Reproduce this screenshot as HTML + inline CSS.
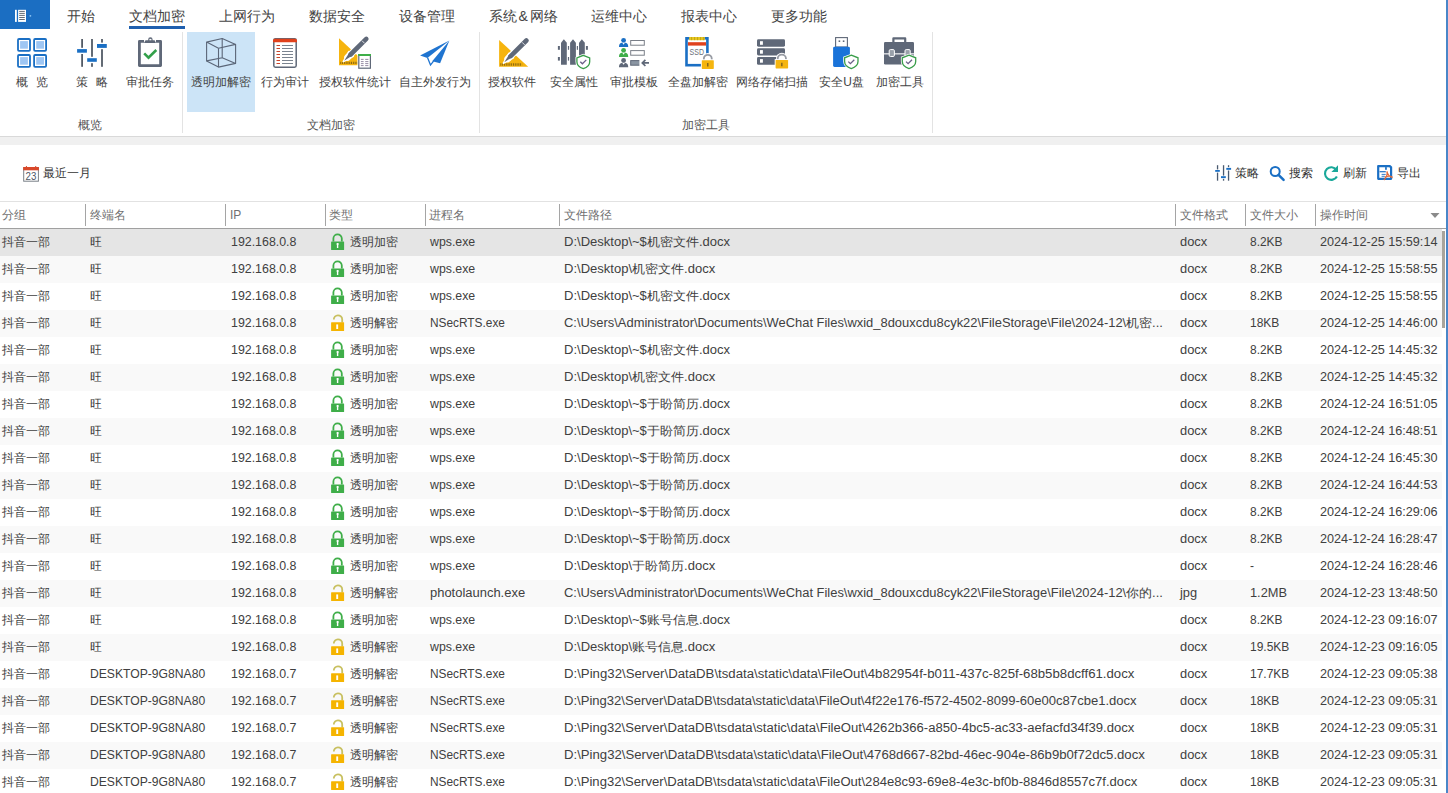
<!DOCTYPE html><html><head><meta charset="utf-8"><title>Ping32</title><style>
*{margin:0;padding:0;box-sizing:border-box}
html,body{width:1448px;height:793px;overflow:hidden;background:#fff}
body{font-family:"Liberation Sans",sans-serif;font-size:12px;color:#333;position:relative}
.a{position:absolute;white-space:nowrap}
.tab{position:absolute;top:1.5px;height:29px;line-height:29px;font-size:14px;color:#444}
.bl{position:absolute;top:72.5px;height:18px;line-height:18px;font-size:12px;color:#444;text-align:center}
.gl{position:absolute;top:117px;height:16px;line-height:16px;font-size:12px;color:#555;text-align:center}
.sep{position:absolute;top:32px;width:1px;height:101px;background:#e3e3e3}
.hd{position:absolute;top:202px;height:26px;line-height:26px;color:#707070;white-space:nowrap}
.hs{position:absolute;top:204px;width:1px;height:22px;background:#a5a5a5}
.row{position:absolute;left:0;width:1442px;height:27px;color:#404040}
.c{position:absolute;top:0;height:27px;line-height:27px;white-space:nowrap}
</style></head><body>
<div class="a" style="left:0;top:0;width:50px;height:29px;background:#1b6ec2"></div>
<svg style="position:absolute;left:12px;top:6px" width="24" height="20" viewBox="12 6 24 20"><rect x="15" y="9.8" width="1.8" height="12.1" fill="#fff"/>
<rect x="18.1" y="9.8" width="7.9" height="12.1" fill="#fff"/>
<g stroke="#3e4650" stroke-width="0.8"><path d="M19.2 11.4h5.6M19.2 13.4h5.6M19.2 15.4h5.6M19.2 17.5h5.6M19.2 19.5h5.6"/></g>
<circle cx="30.4" cy="15.8" r="0.9" fill="#8cc4f4"/></svg>
<div class="tab" style="left:67px">开始</div>
<div class="tab" style="left:129px">文档加密</div>
<div class="tab" style="left:219px">上网行为</div>
<div class="tab" style="left:309px">数据安全</div>
<div class="tab" style="left:399px">设备管理</div>
<div class="tab" style="left:489px">系统<span style='display:inline-block;width:12.5px;text-align:center'>&amp;</span>网络</div>
<div class="tab" style="left:591px">运维中心</div>
<div class="tab" style="left:681px">报表中心</div>
<div class="tab" style="left:771px">更多功能</div>
<div class="a" style="left:129px;top:26px;width:56px;height:3px;background:#1f5fae"></div>
<div class="a" style="left:0;top:136px;width:1448px;height:1px;background:#d9d9d9"></div>
<div class="a" style="left:0;top:137px;width:1448px;height:8px;background:#f0f0f0"></div>
<div class="sep" style="left:182px"></div>
<div class="sep" style="left:479px"></div>
<div class="sep" style="left:932px"></div>
<div class="a" style="left:187px;top:32px;width:68px;height:80px;background:#cce4f7"></div>
<svg style="position:absolute;left:15px;top:36px" width="34" height="34" viewBox="15 36 34 34">
<g fill="#fff" stroke="#1a6fc4" stroke-width="1.8">
<rect x="18" y="39" width="12" height="11.8" rx="1"/><rect x="34.1" y="39" width="12" height="11.8" rx="1"/>
<rect x="18" y="55" width="12" height="11.8" rx="1"/><rect x="34.1" y="55" width="12" height="11.8" rx="1"/></g>
<g fill="#9ec6f3"><rect x="20.1" y="41.1" width="7.8" height="7.6"/><rect x="36.2" y="41.1" width="7.8" height="7.6"/>
<rect x="20.1" y="57.1" width="7.8" height="7.6"/><rect x="36.2" y="57.1" width="7.8" height="7.6"/></g>
</svg>
<svg style="position:absolute;left:75px;top:36px" width="34" height="34" viewBox="75 36 34 34">
<g fill="#535b66">
<rect x="81.2" y="39" width="1.8" height="8.8"/><rect x="81.2" y="54" width="1.8" height="12.8"/>
<rect x="91.1" y="39" width="1.8" height="17.8"/><rect x="91.1" y="63.2" width="1.8" height="3.6"/>
<rect x="101.1" y="39" width="1.8" height="3.6"/><rect x="101.1" y="49.2" width="1.8" height="17.6"/></g>
<g fill="#1a6fc4">
<rect x="77.1" y="49.1" width="9.8" height="3.6"/>
<rect x="87.2" y="58.2" width="9.6" height="3.6"/>
<rect x="97" y="44" width="9.8" height="3.9"/></g>
</svg>
<svg style="position:absolute;left:134px;top:34px" width="32" height="36" viewBox="134 34 32 36">
<path d="M144 41.4 H139.4 V65.6 H160.6 V41.4 H156" fill="none" stroke="#5f6878" stroke-width="2.8" stroke-linejoin="round"/>
<path d="M144 43 L145.5 40.2 H148.2 V39.4 A2.2 2.2 0 0 1 152.6 39.4 V40.2 H154.6 L156 43 Z" fill="#5f6878"/>
<rect x="149.4" y="38.9" width="2" height="1.4" fill="#fff"/>
<path d="M144.2 53.4 L148.5 57.6 L156.3 50" fill="none" stroke="#33a04a" stroke-width="2.6"/>
</svg>
<svg style="position:absolute;left:203px;top:35px" width="36" height="36" viewBox="203 35 36 36"><g fill="none" stroke="#5b6678" stroke-width="1.1" stroke-linejoin="round">
<path d="M206.6 42.1 L222.2 38.5 L235.6 44.4 L218.5 48.2 Z"/>
<path d="M206.6 42.1 V60.9 L218.5 67.1 L235.6 63.4 V44.4"/>
<path d="M218.5 48.2 V67.1"/>
<path d="M222.2 38.5 V57.8 L206.6 60.9 M222.2 57.8 L235.6 63.4"/>
</g></svg>
<svg style="position:absolute;left:271px;top:36px" width="28" height="34" viewBox="271 36 28 34">
<rect x="273.8" y="38.8" width="22.4" height="28.4" rx="1.6" fill="#fff" stroke="#5f6878" stroke-width="1.5"/>
<path d="M273 40.6 a1.8 1.8 0 0 1 1.8 -1.8 h20.4 a1.8 1.8 0 0 1 1.8 1.8 v1.6 h-24 z" fill="#e0411c"/>
<g stroke="#c8442a" stroke-width="1.1">
<path d="M276.5 45.5h3.5M276.5 48.5h3.5M276.5 51.5h3.5M276.5 54.5h3.5M276.5 57.5h3.5M276.5 60.5h3.5M276.5 63.5h3.5"/></g>
<g stroke="#7a8490" stroke-width="1">
<path d="M282 45.5h11M282 48.5h11M282 51.5h11M282 54.5h11M282 57.5h11M282 60.5h11M282 63.5h11"/></g>
</svg>
<svg style="position:absolute;left:336px;top:35px" width="38" height="36" viewBox="336 35 38 36"><path d="M339.00 38.30 L339.00 65.20 L368.10 65.20 Z" fill="#f6b40e"/>
<path d="M340.30 62.90 H362.00" stroke="#7a5a10" stroke-width="2.4" stroke-dasharray="0.9 0.9" opacity="0.9"/>
<path d="M366.30 38.90 L347.60 57.30" stroke="#fff" stroke-width="6.8" stroke-linecap="round"/>
<path d="M348.80 51.70 L353.30 56.20 L343.30 61.60 Z" fill="#fff" stroke="#fff" stroke-width="1.6" stroke-linejoin="round"/>
<path d="M366.30 38.90 L350.60 54.50" stroke="#5f6878" stroke-width="4.6" stroke-linecap="round"/>
<path d="M362.00 40.70 L364.60 43.30" stroke="#fff" stroke-width="0.8"/>
<path d="M348.90 53.20 L351.60 55.90 L344.20 60.70 Z" fill="#5f6878"/>

<rect x="357.4" y="53.2" width="14.6" height="16.2" fill="#fff"/>
<rect x="358.8" y="54.6" width="11.6" height="13.6" fill="#fff" stroke="#5f6878" stroke-width="1.2"/>
<rect x="358.2" y="54" width="12.8" height="2" fill="#3fae49"/>
<g stroke="#8a7f9a" stroke-width="0.9"><path d="M360.9 59.4h2.7M365.2 59.4h3.2M360.9 61.6h2.7M365.2 61.6h3.2M360.9 63.6h2.7M365.2 63.6h3.2M360.9 65.6h2.7M365.2 65.6h3.2"/></g>
</svg>
<svg style="position:absolute;left:417px;top:37px" width="36" height="32" viewBox="417 37 36 32">
<path d="M420.1 55.5 L449.4 40.4 L427.4 57.9 Z" fill="#1f74d0"/>
<path d="M449.4 40.4 L440.1 63.2 L432.2 61.2 Z" fill="#1f74d0"/>
<path d="M427.6 57.8 L430.5 65 L433.6 61.2" fill="none" stroke="#1f74d0" stroke-width="1.3" stroke-linejoin="miter"/>
</svg>
<svg style="position:absolute;left:496px;top:36px" width="36" height="34" viewBox="496 36 36 34"><path d="M499.10 39.90 L499.10 66.80 L528.20 66.80 Z" fill="#f6b40e"/>
<path d="M500.40 64.50 H522.10" stroke="#7a5a10" stroke-width="2.4" stroke-dasharray="0.9 0.9" opacity="0.9"/>
<path d="M526.40 40.50 L507.70 58.90" stroke="#fff" stroke-width="6.8" stroke-linecap="round"/>
<path d="M508.90 53.30 L513.40 57.80 L503.40 63.20 Z" fill="#fff" stroke="#fff" stroke-width="1.6" stroke-linejoin="round"/>
<path d="M526.40 40.50 L510.70 56.10" stroke="#5f6878" stroke-width="4.6" stroke-linecap="round"/>
<path d="M522.10 42.30 L524.70 44.90" stroke="#fff" stroke-width="0.8"/>
<path d="M509.00 54.80 L511.70 57.50 L504.30 62.30 Z" fill="#5f6878"/>
</svg>
<svg style="position:absolute;left:555px;top:36px" width="38" height="36" viewBox="555 36 38 36"><g fill="#5f6878">
<path d="M561 42.8 L563.9 39.2 L566.8 42.8 V64.7 H561 Z"/>
<path d="M570.1 42.8 L573 39.2 L575.9 42.8 V64.7 H570.1 Z"/>
<path d="M579 42.8 L581.9 39.2 L584.8 42.8 V64.7 H579 Z"/>
<rect x="557.9" y="46" width="2" height="3.8"/><rect x="567.9" y="46" width="1.2" height="3.8"/><rect x="576.8" y="46" width="1.2" height="3.8"/><rect x="585.9" y="46" width="2" height="3.8"/>
<rect x="557.9" y="57" width="2" height="3.6"/><rect x="567.9" y="57" width="1.2" height="3.6"/>
</g>
<path d="M583.3 55.3 L589.6999999999999 57.9 V61.699999999999996 C589.6999999999999 65.7 586.3 67.7 583.3 68.6 C580.3 67.7 576.9 65.7 576.9 61.699999999999996 V57.9 Z" fill="#fff" stroke="#fff" stroke-width="2.8"/>
<path d="M583.3 55.3 L589.6999999999999 57.9 V61.699999999999996 C589.6999999999999 65.7 586.3 67.7 583.3 68.6 C580.3 67.7 576.9 65.7 576.9 61.699999999999996 V57.9 Z" fill="#fff" stroke="#3a9e4a" stroke-width="1.3"/>
<path d="M580.3 61.699999999999996 l2.1 2.1 l3.9 -3.9" fill="none" stroke="#6a5f88" stroke-width="1.3"/></svg>
<svg style="position:absolute;left:615px;top:36px" width="38" height="34" viewBox="615 36 38 34"><ellipse cx="623.6" cy="40.300000000000004" rx="2.4" ry="2.3" fill="#1a6fc4"/><path d="M619.0 47.1 C619.0 43.7 620.6 42.6 623.6 42.6 C626.6 42.6 628.2 43.7 628.2 47.1 Z" fill="#1a6fc4"/><path d="M622.3000000000001 42.800000000000004 L623.6 44.7 L624.9 42.800000000000004 Z" fill="#fff"/><ellipse cx="623.6" cy="50.300000000000004" rx="2.4" ry="2.3" fill="#3fae49"/><path d="M619.0 57.1 C619.0 53.7 620.6 52.6 623.6 52.6 C626.6 52.6 628.2 53.7 628.2 57.1 Z" fill="#3fae49"/><path d="M622.3000000000001 52.800000000000004 L623.6 54.7 L624.9 52.800000000000004 Z" fill="#fff"/><ellipse cx="623.6" cy="60.400000000000006" rx="2.4" ry="2.3" fill="#5f6878"/><path d="M619.0 67.2 C619.0 63.800000000000004 620.6 62.7 623.6 62.7 C626.6 62.7 628.2 63.800000000000004 628.2 67.2 Z" fill="#5f6878"/><path d="M622.3000000000001 62.900000000000006 L623.6 64.8 L624.9 62.900000000000006 Z" fill="#fff"/>
<rect x="630.7" y="40.5" width="13.6" height="4.7" fill="none" stroke="#7a7f88" stroke-width="1"/>
<rect x="630.7" y="50.6" width="13.6" height="4.6" fill="none" stroke="#7a7f88" stroke-width="1"/>
<rect x="630.7" y="60.6" width="10" height="4.6" fill="#8a95a2" stroke="#5f6878" stroke-width="1"/>
<rect x="639.4" y="58.6" width="3" height="8.8" fill="#fff"/>
<path d="M649 62.9 H642.6 M645.4 59.8 L642.3 62.9 L645.4 66" fill="none" stroke="#5f6878" stroke-width="1.7"/>
</svg>
<svg style="position:absolute;left:682px;top:34px" width="36" height="38" viewBox="682 34 36 38">
<rect x="686.5" y="38.3" width="20.9" height="26.9" fill="#fff" stroke="#1a6fc4" stroke-width="2.6"/>
<rect x="689.2" y="37" width="15.6" height="3.2" fill="#e8c820"/>
<g stroke="#a88a10" stroke-width="0.6"><path d="M691.6 37v3.2M694.6 37v3.2M697.6 37v3.2M700.6 37v3.2M703.4 37v3.2"/></g>
<rect x="688" y="42.2" width="18" height="3.4" fill="#e0411c"/>
<text x="689.6" y="54.9" font-family="Liberation Sans" font-size="8.4" fill="#6a6f78" textLength="14.4" lengthAdjust="spacingAndGlyphs">SSD</text>
<path d="M702.04 60.80 V58.76 A5.76 5.76 0 0 1 713.56 58.76 V60.80 Z" fill="#fff"/>
<path d="M703.84 60.20 V58.76 A3.96 3.96 0 0 1 711.76 58.76 V60.20" fill="none" stroke="#979ba3" stroke-width="1.8"/>
<rect x="700.90" y="59.30" width="13.80" height="10.50" fill="#fff"/>
<rect x="701.8" y="60.20" width="12" height="8.7" rx="0.6" fill="#f5b50f"/>
<path d="M707.80 63.00 v3.4" stroke="#6a5420" stroke-width="1.2"/></svg>
<svg style="position:absolute;left:754px;top:36px" width="38" height="36" viewBox="754 36 38 36"><g fill="#5f6878">
<rect x="757" y="39.3" width="28" height="7.4" rx="1.4"/>
<rect x="757" y="48.2" width="28" height="7.3" rx="1.4"/>
<rect x="757" y="57" width="28" height="7.8" rx="1.4"/></g>
<g fill="#fff"><rect x="760" y="41.2" width="2.9" height="3.6"/><rect x="760" y="50.1" width="2.9" height="3.6"/><rect x="760" y="59.1" width="2.9" height="3.6"/></g>
<path d="M775.93 60.60 V58.73 A5.92 5.92 0 0 1 787.77 58.73 V60.60 Z" fill="#fff"/>
<path d="M777.73 60.00 V58.73 A4.12 4.12 0 0 1 785.98 58.73 V60.00" fill="none" stroke="#979ba3" stroke-width="1.8"/>
<rect x="774.70" y="59.10" width="14.30" height="10.20" fill="#fff"/>
<rect x="775.6" y="60.00" width="12.5" height="8.4" rx="0.6" fill="#f5b50f"/>
<path d="M781.85 62.80 v3.4" stroke="#6a5420" stroke-width="1.2"/></svg>
<svg style="position:absolute;left:830px;top:35px" width="32" height="36" viewBox="830 35 32 36">
<rect x="835.6" y="37.6" width="11.8" height="9.4" fill="#fff" stroke="#5f6878" stroke-width="1.1"/>
<rect x="838.6" y="40.4" width="1.6" height="1.6" fill="#5f6878"/><rect x="842.8" y="40.4" width="1.6" height="1.6" fill="#5f6878"/>
<rect x="833.1" y="46.8" width="16.8" height="20.1" rx="1.4" fill="#1a73d9"/>
<path d="M851.3 55.2 L858.0 57.800000000000004 V61.6 C858.0 65.60000000000001 854.3 67.60000000000001 851.3 68.60000000000001 C848.3 67.60000000000001 844.5999999999999 65.60000000000001 844.5999999999999 61.6 V57.800000000000004 Z" fill="#fff" stroke="#fff" stroke-width="2.8"/>
<path d="M851.3 55.2 L858.0 57.800000000000004 V61.6 C858.0 65.60000000000001 854.3 67.60000000000001 851.3 68.60000000000001 C848.3 67.60000000000001 844.5999999999999 65.60000000000001 844.5999999999999 61.6 V57.800000000000004 Z" fill="#fff" stroke="#3a9e4a" stroke-width="1.3"/>
<path d="M848.3 61.6 l2.1 2.1 l3.9 -3.9" fill="none" stroke="#6a5f88" stroke-width="1.3"/></svg>
<svg style="position:absolute;left:881px;top:35px" width="38" height="36" viewBox="881 35 38 36">
<path d="M893.4 42.5 V38.4 H905.2 V42.5" fill="none" stroke="#5f6878" stroke-width="2.2" stroke-linejoin="round"/>
<rect x="884" y="42" width="30" height="22.5" rx="1.2" fill="#5f6878"/>
<rect x="884" y="53.3" width="30" height="1.1" fill="#fff"/>
<rect x="889.2" y="49.6" width="5.2" height="6.9" rx="1.2" fill="#9aa1aa" stroke="#fff" stroke-width="1"/>
<rect x="905" y="49.6" width="5.2" height="6.9" rx="1.2" fill="#9aa1aa" stroke="#fff" stroke-width="1"/>
<path d="M909 55.2 L915.7 57.800000000000004 V61.6 C915.7 65.60000000000001 912 67.60000000000001 909 68.60000000000001 C906 67.60000000000001 902.3 65.60000000000001 902.3 61.6 V57.800000000000004 Z" fill="#fff" stroke="#fff" stroke-width="2.8"/>
<path d="M909 55.2 L915.7 57.800000000000004 V61.6 C915.7 65.60000000000001 912 67.60000000000001 909 68.60000000000001 C906 67.60000000000001 902.3 65.60000000000001 902.3 61.6 V57.800000000000004 Z" fill="#fff" stroke="#3a9e4a" stroke-width="1.3"/>
<path d="M906 61.6 l2.1 2.1 l3.9 -3.9" fill="none" stroke="#6a5f88" stroke-width="1.3"/></svg>
<div class="bl" style="left:-18px;width:100px">概<span style='display:inline-block;width:8px'></span>览</div>
<div class="bl" style="left:42px;width:100px">策<span style='display:inline-block;width:8px'></span>略</div>
<div class="bl" style="left:100px;width:100px">审批任务</div>
<div class="bl" style="left:171px;width:100px">透明加解密</div>
<div class="bl" style="left:235px;width:100px">行为审计</div>
<div class="bl" style="left:305px;width:100px">授权软件统计</div>
<div class="bl" style="left:385px;width:100px">自主外发行为</div>
<div class="bl" style="left:462px;width:100px">授权软件</div>
<div class="bl" style="left:524px;width:100px">安全属性</div>
<div class="bl" style="left:584px;width:100px">审批模板</div>
<div class="bl" style="left:648px;width:100px">全盘加解密</div>
<div class="bl" style="left:722px;width:100px">网络存储扫描</div>
<div class="bl" style="left:791.5px;width:100px">安全U盘</div>
<div class="bl" style="left:850px;width:100px">加密工具</div>
<div class="gl" style="left:40px;width:100px">概览</div>
<div class="gl" style="left:281px;width:100px">文档加密</div>
<div class="gl" style="left:656px;width:100px">加密工具</div>
<svg style="position:absolute;left:1213px;top:163px" width="20" height="20" viewBox="1213 163 20 20">
<g fill="#4a5a70"><rect x="1216.9" y="165.2" width="1.3" height="4.2"/><rect x="1216.9" y="172.6" width="1.3" height="8.1"/>
<rect x="1222.9" y="165.2" width="1.3" height="10.4"/><rect x="1222.9" y="178.8" width="1.3" height="1.9"/>
<rect x="1227.9" y="165.2" width="1.3" height="2"/><rect x="1227.9" y="170.5" width="1.3" height="10.2"/></g>
<g fill="#1a6fc4"><rect x="1215.2" y="170" width="4.6" height="1.8"/><rect x="1221" y="176.2" width="4.8" height="1.9"/><rect x="1226.3" y="167.9" width="4.8" height="1.9"/></g>
</svg>
<svg style="position:absolute;left:1267px;top:163px" width="20" height="20" viewBox="1267 163 20 20">
<circle cx="1275.2" cy="171.5" r="4.5" fill="none" stroke="#1a6fc4" stroke-width="2"/>
<path d="M1278.5 174.8 L1283.6 179.9" stroke="#1a6fc4" stroke-width="2.5" stroke-linecap="round"/>
</svg>
<svg style="position:absolute;left:1321px;top:163px" width="20" height="20" viewBox="1321 163 20 20">
<path d="M1336.4 169.8 A6.3 6.3 0 1 0 1336.9 176.4" fill="none" stroke="#1aa89a" stroke-width="2.1"/>
<path d="M1338 165.2 V172 H1331.4 Z" fill="#1aa89a"/>
</svg>
<svg style="position:absolute;left:1375px;top:162px" width="20" height="21" viewBox="1375 162 20 21">
<path d="M1378.2 166.1 H1389.8 L1391.1 167.4 V178.8 H1378.2 Z" fill="none" stroke="#1a6fc4" stroke-width="2.2" stroke-linejoin="round"/>
<path d="M1379.6 171.7 H1385.8" stroke="#1a6fc4" stroke-width="1.2"/>
<rect x="1385.1" y="167.1" width="1.7" height="2.7" fill="#1a6fc4"/>
<path d="M1381.6 174.4h4.1M1381.6 176.3h3.2" stroke="#1a6fc4" stroke-width="0.9"/>
<path d="M1386.9 171.4 C1387.8 173.6 1386.6 177.6 1383.8 180 M1386.9 171.4 C1387.4 174.2 1390 177 1392.6 177.6 M1384.6 177 C1387 176.2 1390.4 176 1392.4 176.8" fill="none" stroke="#e06a3a" stroke-width="1.3"/>
</svg>
<svg style="position:absolute;left:21px;top:164px" width="20" height="20" viewBox="21 164 20 20">
<rect x="23.7" y="167.6" width="14.7" height="13.6" fill="#fff" stroke="#7a8088" stroke-width="1"/>
<rect x="23.2" y="167" width="15.7" height="3.3" fill="#d9482a"/>
<rect x="25.9" y="166" width="1" height="1.6" fill="#d9482a"/><rect x="35.2" y="166" width="1" height="1.6" fill="#d9482a"/>
<text x="25.6" y="179.9" font-family="Liberation Sans" font-size="10.4" fill="#4e5666" textLength="10.8" lengthAdjust="spacingAndGlyphs">23</text>
</svg>
<div class="a" style="left:43px;top:164px;height:18px;line-height:18px">最近一月</div>
<div class="a" style="left:1235px;top:164px;height:18px;line-height:18px">策略</div>
<div class="a" style="left:1289px;top:164px;height:18px;line-height:18px">搜索</div>
<div class="a" style="left:1343px;top:164px;height:18px;line-height:18px">刷新</div>
<div class="a" style="left:1397px;top:164px;height:18px;line-height:18px">导出</div>
<div class="a" style="left:0;top:201px;width:1446px;height:1px;background:#e2e2e2"></div>
<div class="a" style="left:0;top:228px;width:1446px;height:1px;background:#a0a0a0"></div>
<div class="hs" style="left:85px"></div>
<div class="hs" style="left:225px"></div>
<div class="hs" style="left:325px"></div>
<div class="hs" style="left:425px"></div>
<div class="hs" style="left:559px"></div>
<div class="hs" style="left:1175px"></div>
<div class="hs" style="left:1245px"></div>
<div class="hs" style="left:1315px"></div>
<div class="hd" style="left:2px">分组</div>
<div class="hd" style="left:90px">终端名</div>
<div class="hd" style="left:230px">IP</div>
<div class="hd" style="left:329px">类型</div>
<div class="hd" style="left:429px">进程名</div>
<div class="hd" style="left:564px">文件路径</div>
<div class="hd" style="left:1180px">文件格式</div>
<div class="hd" style="left:1250px">文件大小</div>
<div class="hd" style="left:1320px">操作时间</div>
<svg class="a" style="left:1429px;top:211px" width="12" height="8"><path d="M1.5 2 H10.5 L6 7 Z" fill="#8a8a8a"/></svg>
<div class="row" style="top:229px;background:#e5e5e5">
<div class="c" style="left:2px">抖音一部</div>
<div class="c" style="left:90px">旺</div>
<div class="c" style="left:231px;transform:scaleX(1.032);transform-origin:0 50%">192.168.0.8</div>
<div class="c" style="left:350px">透明加密</div>
<div class="c" style="left:430px;transform:scaleX(1.027);transform-origin:0 50%">wps.exe</div>
<div class="c" style="left:564px;transform:scaleX(1.085);transform-origin:0 50%">D:\Desktop\~$机密文件.docx</div>
<div class="c" style="left:1180px;transform:scaleX(1.072);transform-origin:0 50%">docx</div>
<div class="c" style="left:1250px;transform:scaleX(0.994);transform-origin:0 50%">8.2KB</div>
<div class="c" style="left:1320px;transform:scaleX(1.054);transform-origin:0 50%">2024-12-25 15:59:14</div>
</div>
<svg style="position:absolute;left:329px;top:231px" width="18" height="22" viewBox="329 231 18 22">
<path d="M333.4 241.6 V238.5 A4.2 4.2 0 0 1 341.8 238.5 V241.6" fill="none" stroke="#3fae49" stroke-width="1.8"/>
<rect x="331.1" y="241.4" width="13" height="8.6" rx="0.5" fill="#3fae49"/>
<path d="M337.6 243.2 v4.8" stroke="#fff" stroke-width="1.4"/>
<circle cx="337.6" cy="244" r="1.1" fill="#fff"/></svg>
<div class="row" style="top:256px;background:#f9f9f9">
<div class="c" style="left:2px">抖音一部</div>
<div class="c" style="left:90px">旺</div>
<div class="c" style="left:231px;transform:scaleX(1.032);transform-origin:0 50%">192.168.0.8</div>
<div class="c" style="left:350px">透明加密</div>
<div class="c" style="left:430px;transform:scaleX(1.027);transform-origin:0 50%">wps.exe</div>
<div class="c" style="left:564px;transform:scaleX(1.085);transform-origin:0 50%">D:\Desktop\机密文件.docx</div>
<div class="c" style="left:1180px;transform:scaleX(1.072);transform-origin:0 50%">docx</div>
<div class="c" style="left:1250px;transform:scaleX(0.994);transform-origin:0 50%">8.2KB</div>
<div class="c" style="left:1320px;transform:scaleX(1.054);transform-origin:0 50%">2024-12-25 15:58:55</div>
</div>
<svg style="position:absolute;left:329px;top:258px" width="18" height="22" viewBox="329 258 18 22">
<path d="M333.4 268.6 V265.5 A4.2 4.2 0 0 1 341.8 265.5 V268.6" fill="none" stroke="#3fae49" stroke-width="1.8"/>
<rect x="331.1" y="268.4" width="13" height="8.6" rx="0.5" fill="#3fae49"/>
<path d="M337.6 270.2 v4.8" stroke="#fff" stroke-width="1.4"/>
<circle cx="337.6" cy="271" r="1.1" fill="#fff"/></svg>
<div class="row" style="top:283px;background:#ffffff">
<div class="c" style="left:2px">抖音一部</div>
<div class="c" style="left:90px">旺</div>
<div class="c" style="left:231px;transform:scaleX(1.032);transform-origin:0 50%">192.168.0.8</div>
<div class="c" style="left:350px">透明加密</div>
<div class="c" style="left:430px;transform:scaleX(1.027);transform-origin:0 50%">wps.exe</div>
<div class="c" style="left:564px;transform:scaleX(1.085);transform-origin:0 50%">D:\Desktop\~$机密文件.docx</div>
<div class="c" style="left:1180px;transform:scaleX(1.072);transform-origin:0 50%">docx</div>
<div class="c" style="left:1250px;transform:scaleX(0.994);transform-origin:0 50%">8.2KB</div>
<div class="c" style="left:1320px;transform:scaleX(1.054);transform-origin:0 50%">2024-12-25 15:58:55</div>
</div>
<svg style="position:absolute;left:329px;top:285px" width="18" height="22" viewBox="329 285 18 22">
<path d="M333.4 295.6 V292.5 A4.2 4.2 0 0 1 341.8 292.5 V295.6" fill="none" stroke="#3fae49" stroke-width="1.8"/>
<rect x="331.1" y="295.4" width="13" height="8.6" rx="0.5" fill="#3fae49"/>
<path d="M337.6 297.2 v4.8" stroke="#fff" stroke-width="1.4"/>
<circle cx="337.6" cy="298" r="1.1" fill="#fff"/></svg>
<div class="row" style="top:310px;background:#f9f9f9">
<div class="c" style="left:2px">抖音一部</div>
<div class="c" style="left:90px">旺</div>
<div class="c" style="left:231px;transform:scaleX(1.032);transform-origin:0 50%">192.168.0.8</div>
<div class="c" style="left:350px">透明解密</div>
<div class="c" style="left:430px;transform:scaleX(0.988);transform-origin:0 50%">NSecRTS.exe</div>
<div class="c" style="left:564px;transform:scaleX(1.077);transform-origin:0 50%">C:\Users\Administrator\Documents\WeChat Files\wxid_8douxcdu8cyk22\FileStorage\File\2024-12\机密...</div>
<div class="c" style="left:1180px;transform:scaleX(1.072);transform-origin:0 50%">docx</div>
<div class="c" style="left:1250px">18KB</div>
<div class="c" style="left:1320px;transform:scaleX(1.054);transform-origin:0 50%">2024-12-25 14:46:00</div>
</div>
<svg style="position:absolute;left:329px;top:312px" width="18" height="22" viewBox="329 312 18 22">
<path d="M333.8 319.6 A4.2 4.2 0 0 1 342.2 319.4 V322.6" fill="none" stroke="#c8c060" stroke-width="1.8"/>
<rect x="331.1" y="322.2" width="13" height="8.8" rx="0.5" fill="#f5b400"/>
<path d="M337.2 324.4 v4.6" stroke="#fff" stroke-width="1.9"/></svg>
<div class="row" style="top:337px;background:#ffffff">
<div class="c" style="left:2px">抖音一部</div>
<div class="c" style="left:90px">旺</div>
<div class="c" style="left:231px;transform:scaleX(1.032);transform-origin:0 50%">192.168.0.8</div>
<div class="c" style="left:350px">透明加密</div>
<div class="c" style="left:430px;transform:scaleX(1.027);transform-origin:0 50%">wps.exe</div>
<div class="c" style="left:564px;transform:scaleX(1.085);transform-origin:0 50%">D:\Desktop\~$机密文件.docx</div>
<div class="c" style="left:1180px;transform:scaleX(1.072);transform-origin:0 50%">docx</div>
<div class="c" style="left:1250px;transform:scaleX(0.994);transform-origin:0 50%">8.2KB</div>
<div class="c" style="left:1320px;transform:scaleX(1.054);transform-origin:0 50%">2024-12-25 14:45:32</div>
</div>
<svg style="position:absolute;left:329px;top:339px" width="18" height="22" viewBox="329 339 18 22">
<path d="M333.4 349.6 V346.5 A4.2 4.2 0 0 1 341.8 346.5 V349.6" fill="none" stroke="#3fae49" stroke-width="1.8"/>
<rect x="331.1" y="349.4" width="13" height="8.6" rx="0.5" fill="#3fae49"/>
<path d="M337.6 351.2 v4.8" stroke="#fff" stroke-width="1.4"/>
<circle cx="337.6" cy="352" r="1.1" fill="#fff"/></svg>
<div class="row" style="top:364px;background:#f9f9f9">
<div class="c" style="left:2px">抖音一部</div>
<div class="c" style="left:90px">旺</div>
<div class="c" style="left:231px;transform:scaleX(1.032);transform-origin:0 50%">192.168.0.8</div>
<div class="c" style="left:350px">透明加密</div>
<div class="c" style="left:430px;transform:scaleX(1.027);transform-origin:0 50%">wps.exe</div>
<div class="c" style="left:564px;transform:scaleX(1.085);transform-origin:0 50%">D:\Desktop\机密文件.docx</div>
<div class="c" style="left:1180px;transform:scaleX(1.072);transform-origin:0 50%">docx</div>
<div class="c" style="left:1250px;transform:scaleX(0.994);transform-origin:0 50%">8.2KB</div>
<div class="c" style="left:1320px;transform:scaleX(1.054);transform-origin:0 50%">2024-12-25 14:45:32</div>
</div>
<svg style="position:absolute;left:329px;top:366px" width="18" height="22" viewBox="329 366 18 22">
<path d="M333.4 376.6 V373.5 A4.2 4.2 0 0 1 341.8 373.5 V376.6" fill="none" stroke="#3fae49" stroke-width="1.8"/>
<rect x="331.1" y="376.4" width="13" height="8.6" rx="0.5" fill="#3fae49"/>
<path d="M337.6 378.2 v4.8" stroke="#fff" stroke-width="1.4"/>
<circle cx="337.6" cy="379" r="1.1" fill="#fff"/></svg>
<div class="row" style="top:391px;background:#ffffff">
<div class="c" style="left:2px">抖音一部</div>
<div class="c" style="left:90px">旺</div>
<div class="c" style="left:231px;transform:scaleX(1.032);transform-origin:0 50%">192.168.0.8</div>
<div class="c" style="left:350px">透明加密</div>
<div class="c" style="left:430px;transform:scaleX(1.027);transform-origin:0 50%">wps.exe</div>
<div class="c" style="left:564px;transform:scaleX(1.085);transform-origin:0 50%">D:\Desktop\~$于盼简历.docx</div>
<div class="c" style="left:1180px;transform:scaleX(1.072);transform-origin:0 50%">docx</div>
<div class="c" style="left:1250px;transform:scaleX(0.994);transform-origin:0 50%">8.2KB</div>
<div class="c" style="left:1320px;transform:scaleX(1.054);transform-origin:0 50%">2024-12-24 16:51:05</div>
</div>
<svg style="position:absolute;left:329px;top:393px" width="18" height="22" viewBox="329 393 18 22">
<path d="M333.4 403.6 V400.5 A4.2 4.2 0 0 1 341.8 400.5 V403.6" fill="none" stroke="#3fae49" stroke-width="1.8"/>
<rect x="331.1" y="403.4" width="13" height="8.6" rx="0.5" fill="#3fae49"/>
<path d="M337.6 405.2 v4.8" stroke="#fff" stroke-width="1.4"/>
<circle cx="337.6" cy="406" r="1.1" fill="#fff"/></svg>
<div class="row" style="top:418px;background:#f9f9f9">
<div class="c" style="left:2px">抖音一部</div>
<div class="c" style="left:90px">旺</div>
<div class="c" style="left:231px;transform:scaleX(1.032);transform-origin:0 50%">192.168.0.8</div>
<div class="c" style="left:350px">透明加密</div>
<div class="c" style="left:430px;transform:scaleX(1.027);transform-origin:0 50%">wps.exe</div>
<div class="c" style="left:564px;transform:scaleX(1.085);transform-origin:0 50%">D:\Desktop\~$于盼简历.docx</div>
<div class="c" style="left:1180px;transform:scaleX(1.072);transform-origin:0 50%">docx</div>
<div class="c" style="left:1250px;transform:scaleX(0.994);transform-origin:0 50%">8.2KB</div>
<div class="c" style="left:1320px;transform:scaleX(1.054);transform-origin:0 50%">2024-12-24 16:48:51</div>
</div>
<svg style="position:absolute;left:329px;top:420px" width="18" height="22" viewBox="329 420 18 22">
<path d="M333.4 430.6 V427.5 A4.2 4.2 0 0 1 341.8 427.5 V430.6" fill="none" stroke="#3fae49" stroke-width="1.8"/>
<rect x="331.1" y="430.4" width="13" height="8.6" rx="0.5" fill="#3fae49"/>
<path d="M337.6 432.2 v4.8" stroke="#fff" stroke-width="1.4"/>
<circle cx="337.6" cy="433" r="1.1" fill="#fff"/></svg>
<div class="row" style="top:445px;background:#ffffff">
<div class="c" style="left:2px">抖音一部</div>
<div class="c" style="left:90px">旺</div>
<div class="c" style="left:231px;transform:scaleX(1.032);transform-origin:0 50%">192.168.0.8</div>
<div class="c" style="left:350px">透明加密</div>
<div class="c" style="left:430px;transform:scaleX(1.027);transform-origin:0 50%">wps.exe</div>
<div class="c" style="left:564px;transform:scaleX(1.085);transform-origin:0 50%">D:\Desktop\~$于盼简历.docx</div>
<div class="c" style="left:1180px;transform:scaleX(1.072);transform-origin:0 50%">docx</div>
<div class="c" style="left:1250px;transform:scaleX(0.994);transform-origin:0 50%">8.2KB</div>
<div class="c" style="left:1320px;transform:scaleX(1.054);transform-origin:0 50%">2024-12-24 16:45:30</div>
</div>
<svg style="position:absolute;left:329px;top:447px" width="18" height="22" viewBox="329 447 18 22">
<path d="M333.4 457.6 V454.5 A4.2 4.2 0 0 1 341.8 454.5 V457.6" fill="none" stroke="#3fae49" stroke-width="1.8"/>
<rect x="331.1" y="457.4" width="13" height="8.6" rx="0.5" fill="#3fae49"/>
<path d="M337.6 459.2 v4.8" stroke="#fff" stroke-width="1.4"/>
<circle cx="337.6" cy="460" r="1.1" fill="#fff"/></svg>
<div class="row" style="top:472px;background:#f9f9f9">
<div class="c" style="left:2px">抖音一部</div>
<div class="c" style="left:90px">旺</div>
<div class="c" style="left:231px;transform:scaleX(1.032);transform-origin:0 50%">192.168.0.8</div>
<div class="c" style="left:350px">透明加密</div>
<div class="c" style="left:430px;transform:scaleX(1.027);transform-origin:0 50%">wps.exe</div>
<div class="c" style="left:564px;transform:scaleX(1.085);transform-origin:0 50%">D:\Desktop\~$于盼简历.docx</div>
<div class="c" style="left:1180px;transform:scaleX(1.072);transform-origin:0 50%">docx</div>
<div class="c" style="left:1250px;transform:scaleX(0.994);transform-origin:0 50%">8.2KB</div>
<div class="c" style="left:1320px;transform:scaleX(1.054);transform-origin:0 50%">2024-12-24 16:44:53</div>
</div>
<svg style="position:absolute;left:329px;top:474px" width="18" height="22" viewBox="329 474 18 22">
<path d="M333.4 484.6 V481.5 A4.2 4.2 0 0 1 341.8 481.5 V484.6" fill="none" stroke="#3fae49" stroke-width="1.8"/>
<rect x="331.1" y="484.4" width="13" height="8.6" rx="0.5" fill="#3fae49"/>
<path d="M337.6 486.2 v4.8" stroke="#fff" stroke-width="1.4"/>
<circle cx="337.6" cy="487" r="1.1" fill="#fff"/></svg>
<div class="row" style="top:499px;background:#ffffff">
<div class="c" style="left:2px">抖音一部</div>
<div class="c" style="left:90px">旺</div>
<div class="c" style="left:231px;transform:scaleX(1.032);transform-origin:0 50%">192.168.0.8</div>
<div class="c" style="left:350px">透明加密</div>
<div class="c" style="left:430px;transform:scaleX(1.027);transform-origin:0 50%">wps.exe</div>
<div class="c" style="left:564px;transform:scaleX(1.085);transform-origin:0 50%">D:\Desktop\~$于盼简历.docx</div>
<div class="c" style="left:1180px;transform:scaleX(1.072);transform-origin:0 50%">docx</div>
<div class="c" style="left:1250px;transform:scaleX(0.994);transform-origin:0 50%">8.2KB</div>
<div class="c" style="left:1320px;transform:scaleX(1.054);transform-origin:0 50%">2024-12-24 16:29:06</div>
</div>
<svg style="position:absolute;left:329px;top:501px" width="18" height="22" viewBox="329 501 18 22">
<path d="M333.4 511.6 V508.5 A4.2 4.2 0 0 1 341.8 508.5 V511.6" fill="none" stroke="#3fae49" stroke-width="1.8"/>
<rect x="331.1" y="511.4" width="13" height="8.6" rx="0.5" fill="#3fae49"/>
<path d="M337.6 513.2 v4.8" stroke="#fff" stroke-width="1.4"/>
<circle cx="337.6" cy="514" r="1.1" fill="#fff"/></svg>
<div class="row" style="top:526px;background:#f9f9f9">
<div class="c" style="left:2px">抖音一部</div>
<div class="c" style="left:90px">旺</div>
<div class="c" style="left:231px;transform:scaleX(1.032);transform-origin:0 50%">192.168.0.8</div>
<div class="c" style="left:350px">透明加密</div>
<div class="c" style="left:430px;transform:scaleX(1.027);transform-origin:0 50%">wps.exe</div>
<div class="c" style="left:564px;transform:scaleX(1.085);transform-origin:0 50%">D:\Desktop\~$于盼简历.docx</div>
<div class="c" style="left:1180px;transform:scaleX(1.072);transform-origin:0 50%">docx</div>
<div class="c" style="left:1250px;transform:scaleX(0.994);transform-origin:0 50%">8.2KB</div>
<div class="c" style="left:1320px;transform:scaleX(1.054);transform-origin:0 50%">2024-12-24 16:28:47</div>
</div>
<svg style="position:absolute;left:329px;top:528px" width="18" height="22" viewBox="329 528 18 22">
<path d="M333.4 538.6 V535.5 A4.2 4.2 0 0 1 341.8 535.5 V538.6" fill="none" stroke="#3fae49" stroke-width="1.8"/>
<rect x="331.1" y="538.4" width="13" height="8.6" rx="0.5" fill="#3fae49"/>
<path d="M337.6 540.2 v4.8" stroke="#fff" stroke-width="1.4"/>
<circle cx="337.6" cy="541" r="1.1" fill="#fff"/></svg>
<div class="row" style="top:553px;background:#ffffff">
<div class="c" style="left:2px">抖音一部</div>
<div class="c" style="left:90px">旺</div>
<div class="c" style="left:231px;transform:scaleX(1.032);transform-origin:0 50%">192.168.0.8</div>
<div class="c" style="left:350px">透明加密</div>
<div class="c" style="left:430px;transform:scaleX(1.027);transform-origin:0 50%">wps.exe</div>
<div class="c" style="left:564px;transform:scaleX(1.085);transform-origin:0 50%">D:\Desktop\于盼简历.docx</div>
<div class="c" style="left:1180px;transform:scaleX(1.072);transform-origin:0 50%">docx</div>
<div class="c" style="left:1250px">-</div>
<div class="c" style="left:1320px;transform:scaleX(1.054);transform-origin:0 50%">2024-12-24 16:28:46</div>
</div>
<svg style="position:absolute;left:329px;top:555px" width="18" height="22" viewBox="329 555 18 22">
<path d="M333.4 565.6 V562.5 A4.2 4.2 0 0 1 341.8 562.5 V565.6" fill="none" stroke="#3fae49" stroke-width="1.8"/>
<rect x="331.1" y="565.4" width="13" height="8.6" rx="0.5" fill="#3fae49"/>
<path d="M337.6 567.2 v4.8" stroke="#fff" stroke-width="1.4"/>
<circle cx="337.6" cy="568" r="1.1" fill="#fff"/></svg>
<div class="row" style="top:580px;background:#f9f9f9">
<div class="c" style="left:2px">抖音一部</div>
<div class="c" style="left:90px">旺</div>
<div class="c" style="left:231px;transform:scaleX(1.032);transform-origin:0 50%">192.168.0.8</div>
<div class="c" style="left:350px">透明解密</div>
<div class="c" style="left:430px;transform:scaleX(1.08);transform-origin:0 50%">photolaunch.exe</div>
<div class="c" style="left:564px;transform:scaleX(1.077);transform-origin:0 50%">C:\Users\Administrator\Documents\WeChat Files\wxid_8douxcdu8cyk22\FileStorage\File\2024-12\你的...</div>
<div class="c" style="left:1180px;transform:scaleX(1.072);transform-origin:0 50%">jpg</div>
<div class="c" style="left:1250px;transform:scaleX(1.067);transform-origin:0 50%">1.2MB</div>
<div class="c" style="left:1320px;transform:scaleX(1.054);transform-origin:0 50%">2024-12-23 13:48:50</div>
</div>
<svg style="position:absolute;left:329px;top:582px" width="18" height="22" viewBox="329 582 18 22">
<path d="M333.8 589.6 A4.2 4.2 0 0 1 342.2 589.4 V592.6" fill="none" stroke="#c8c060" stroke-width="1.8"/>
<rect x="331.1" y="592.2" width="13" height="8.8" rx="0.5" fill="#f5b400"/>
<path d="M337.2 594.4 v4.6" stroke="#fff" stroke-width="1.9"/></svg>
<div class="row" style="top:607px;background:#ffffff">
<div class="c" style="left:2px">抖音一部</div>
<div class="c" style="left:90px">旺</div>
<div class="c" style="left:231px;transform:scaleX(1.032);transform-origin:0 50%">192.168.0.8</div>
<div class="c" style="left:350px">透明加密</div>
<div class="c" style="left:430px;transform:scaleX(1.027);transform-origin:0 50%">wps.exe</div>
<div class="c" style="left:564px;transform:scaleX(1.085);transform-origin:0 50%">D:\Desktop\~$账号信息.docx</div>
<div class="c" style="left:1180px;transform:scaleX(1.072);transform-origin:0 50%">docx</div>
<div class="c" style="left:1250px;transform:scaleX(0.994);transform-origin:0 50%">8.2KB</div>
<div class="c" style="left:1320px;transform:scaleX(1.054);transform-origin:0 50%">2024-12-23 09:16:07</div>
</div>
<svg style="position:absolute;left:329px;top:609px" width="18" height="22" viewBox="329 609 18 22">
<path d="M333.4 619.6 V616.5 A4.2 4.2 0 0 1 341.8 616.5 V619.6" fill="none" stroke="#3fae49" stroke-width="1.8"/>
<rect x="331.1" y="619.4" width="13" height="8.6" rx="0.5" fill="#3fae49"/>
<path d="M337.6 621.2 v4.8" stroke="#fff" stroke-width="1.4"/>
<circle cx="337.6" cy="622" r="1.1" fill="#fff"/></svg>
<div class="row" style="top:634px;background:#f9f9f9">
<div class="c" style="left:2px">抖音一部</div>
<div class="c" style="left:90px">旺</div>
<div class="c" style="left:231px;transform:scaleX(1.032);transform-origin:0 50%">192.168.0.8</div>
<div class="c" style="left:350px">透明解密</div>
<div class="c" style="left:430px;transform:scaleX(1.027);transform-origin:0 50%">wps.exe</div>
<div class="c" style="left:564px;transform:scaleX(1.085);transform-origin:0 50%">D:\Desktop\账号信息.docx</div>
<div class="c" style="left:1180px;transform:scaleX(1.072);transform-origin:0 50%">docx</div>
<div class="c" style="left:1250px">19.5KB</div>
<div class="c" style="left:1320px;transform:scaleX(1.054);transform-origin:0 50%">2024-12-23 09:16:05</div>
</div>
<svg style="position:absolute;left:329px;top:636px" width="18" height="22" viewBox="329 636 18 22">
<path d="M333.8 643.6 A4.2 4.2 0 0 1 342.2 643.4 V646.6" fill="none" stroke="#c8c060" stroke-width="1.8"/>
<rect x="331.1" y="646.2" width="13" height="8.8" rx="0.5" fill="#f5b400"/>
<path d="M337.2 648.4 v4.6" stroke="#fff" stroke-width="1.9"/></svg>
<div class="row" style="top:661px;background:#ffffff">
<div class="c" style="left:2px">抖音一部</div>
<div class="c" style="left:90px;transform:scaleX(1.012);transform-origin:0 50%">DESKTOP-9G8NA80</div>
<div class="c" style="left:231px;transform:scaleX(1.032);transform-origin:0 50%">192.168.0.7</div>
<div class="c" style="left:350px">透明解密</div>
<div class="c" style="left:430px;transform:scaleX(0.988);transform-origin:0 50%">NSecRTS.exe</div>
<div class="c" style="left:564px;transform:scaleX(1.1);transform-origin:0 50%">D:\Ping32\Server\DataDB\tsdata\static\data\FileOut\4b82954f-b011-437c-825f-68b5b8dcff61.docx</div>
<div class="c" style="left:1180px;transform:scaleX(1.072);transform-origin:0 50%">docx</div>
<div class="c" style="left:1250px">17.7KB</div>
<div class="c" style="left:1320px;transform:scaleX(1.054);transform-origin:0 50%">2024-12-23 09:05:38</div>
</div>
<svg style="position:absolute;left:329px;top:663px" width="18" height="22" viewBox="329 663 18 22">
<path d="M333.8 670.6 A4.2 4.2 0 0 1 342.2 670.4 V673.6" fill="none" stroke="#c8c060" stroke-width="1.8"/>
<rect x="331.1" y="673.2" width="13" height="8.8" rx="0.5" fill="#f5b400"/>
<path d="M337.2 675.4 v4.6" stroke="#fff" stroke-width="1.9"/></svg>
<div class="row" style="top:688px;background:#f9f9f9">
<div class="c" style="left:2px">抖音一部</div>
<div class="c" style="left:90px;transform:scaleX(1.012);transform-origin:0 50%">DESKTOP-9G8NA80</div>
<div class="c" style="left:231px;transform:scaleX(1.032);transform-origin:0 50%">192.168.0.7</div>
<div class="c" style="left:350px">透明解密</div>
<div class="c" style="left:430px;transform:scaleX(0.988);transform-origin:0 50%">NSecRTS.exe</div>
<div class="c" style="left:564px;transform:scaleX(1.088);transform-origin:0 50%">D:\Ping32\Server\DataDB\tsdata\static\data\FileOut\4f22e176-f572-4502-8099-60e00c87cbe1.docx</div>
<div class="c" style="left:1180px;transform:scaleX(1.072);transform-origin:0 50%">docx</div>
<div class="c" style="left:1250px">18KB</div>
<div class="c" style="left:1320px;transform:scaleX(1.054);transform-origin:0 50%">2024-12-23 09:05:31</div>
</div>
<svg style="position:absolute;left:329px;top:690px" width="18" height="22" viewBox="329 690 18 22">
<path d="M333.8 697.6 A4.2 4.2 0 0 1 342.2 697.4 V700.6" fill="none" stroke="#c8c060" stroke-width="1.8"/>
<rect x="331.1" y="700.2" width="13" height="8.8" rx="0.5" fill="#f5b400"/>
<path d="M337.2 702.4 v4.6" stroke="#fff" stroke-width="1.9"/></svg>
<div class="row" style="top:715px;background:#ffffff">
<div class="c" style="left:2px">抖音一部</div>
<div class="c" style="left:90px;transform:scaleX(1.012);transform-origin:0 50%">DESKTOP-9G8NA80</div>
<div class="c" style="left:231px;transform:scaleX(1.032);transform-origin:0 50%">192.168.0.7</div>
<div class="c" style="left:350px">透明解密</div>
<div class="c" style="left:430px;transform:scaleX(0.988);transform-origin:0 50%">NSecRTS.exe</div>
<div class="c" style="left:564px;transform:scaleX(1.092);transform-origin:0 50%">D:\Ping32\Server\DataDB\tsdata\static\data\FileOut\4262b366-a850-4bc5-ac33-aefacfd34f39.docx</div>
<div class="c" style="left:1180px;transform:scaleX(1.072);transform-origin:0 50%">docx</div>
<div class="c" style="left:1250px">18KB</div>
<div class="c" style="left:1320px;transform:scaleX(1.054);transform-origin:0 50%">2024-12-23 09:05:31</div>
</div>
<svg style="position:absolute;left:329px;top:717px" width="18" height="22" viewBox="329 717 18 22">
<path d="M333.8 724.6 A4.2 4.2 0 0 1 342.2 724.4 V727.6" fill="none" stroke="#c8c060" stroke-width="1.8"/>
<rect x="331.1" y="727.2" width="13" height="8.8" rx="0.5" fill="#f5b400"/>
<path d="M337.2 729.4 v4.6" stroke="#fff" stroke-width="1.9"/></svg>
<div class="row" style="top:742px;background:#f9f9f9">
<div class="c" style="left:2px">抖音一部</div>
<div class="c" style="left:90px;transform:scaleX(1.012);transform-origin:0 50%">DESKTOP-9G8NA80</div>
<div class="c" style="left:231px;transform:scaleX(1.032);transform-origin:0 50%">192.168.0.7</div>
<div class="c" style="left:350px">透明解密</div>
<div class="c" style="left:430px;transform:scaleX(0.988);transform-origin:0 50%">NSecRTS.exe</div>
<div class="c" style="left:564px;transform:scaleX(1.0966);transform-origin:0 50%">D:\Ping32\Server\DataDB\tsdata\static\data\FileOut\4768d667-82bd-46ec-904e-86b9b0f72dc5.docx</div>
<div class="c" style="left:1180px;transform:scaleX(1.072);transform-origin:0 50%">docx</div>
<div class="c" style="left:1250px">18KB</div>
<div class="c" style="left:1320px;transform:scaleX(1.054);transform-origin:0 50%">2024-12-23 09:05:31</div>
</div>
<svg style="position:absolute;left:329px;top:744px" width="18" height="22" viewBox="329 744 18 22">
<path d="M333.8 751.6 A4.2 4.2 0 0 1 342.2 751.4 V754.6" fill="none" stroke="#c8c060" stroke-width="1.8"/>
<rect x="331.1" y="754.2" width="13" height="8.8" rx="0.5" fill="#f5b400"/>
<path d="M337.2 756.4 v4.6" stroke="#fff" stroke-width="1.9"/></svg>
<div class="row" style="top:769px;background:#ffffff">
<div class="c" style="left:2px">抖音一部</div>
<div class="c" style="left:90px;transform:scaleX(1.012);transform-origin:0 50%">DESKTOP-9G8NA80</div>
<div class="c" style="left:231px;transform:scaleX(1.032);transform-origin:0 50%">192.168.0.7</div>
<div class="c" style="left:350px">透明解密</div>
<div class="c" style="left:430px;transform:scaleX(0.988);transform-origin:0 50%">NSecRTS.exe</div>
<div class="c" style="left:564px;transform:scaleX(1.0905);transform-origin:0 50%">D:\Ping32\Server\DataDB\tsdata\static\data\FileOut\284e8c93-69e8-4e3c-bf0b-8846d8557c7f.docx</div>
<div class="c" style="left:1180px;transform:scaleX(1.072);transform-origin:0 50%">docx</div>
<div class="c" style="left:1250px">18KB</div>
<div class="c" style="left:1320px;transform:scaleX(1.054);transform-origin:0 50%">2024-12-23 09:05:31</div>
</div>
<svg style="position:absolute;left:329px;top:771px" width="18" height="22" viewBox="329 771 18 22">
<path d="M333.8 778.6 A4.2 4.2 0 0 1 342.2 778.4 V781.6" fill="none" stroke="#c8c060" stroke-width="1.8"/>
<rect x="331.1" y="781.2" width="13" height="8.8" rx="0.5" fill="#f5b400"/>
<path d="M337.2 783.4 v4.6" stroke="#fff" stroke-width="1.9"/></svg>
<div class="a" style="left:1442px;top:231px;width:2.5px;height:97px;background:#a8a49c"></div>
<div class="a" style="left:1446px;top:0;width:2px;height:793px;background:#4a86c8"></div>
</body></html>
